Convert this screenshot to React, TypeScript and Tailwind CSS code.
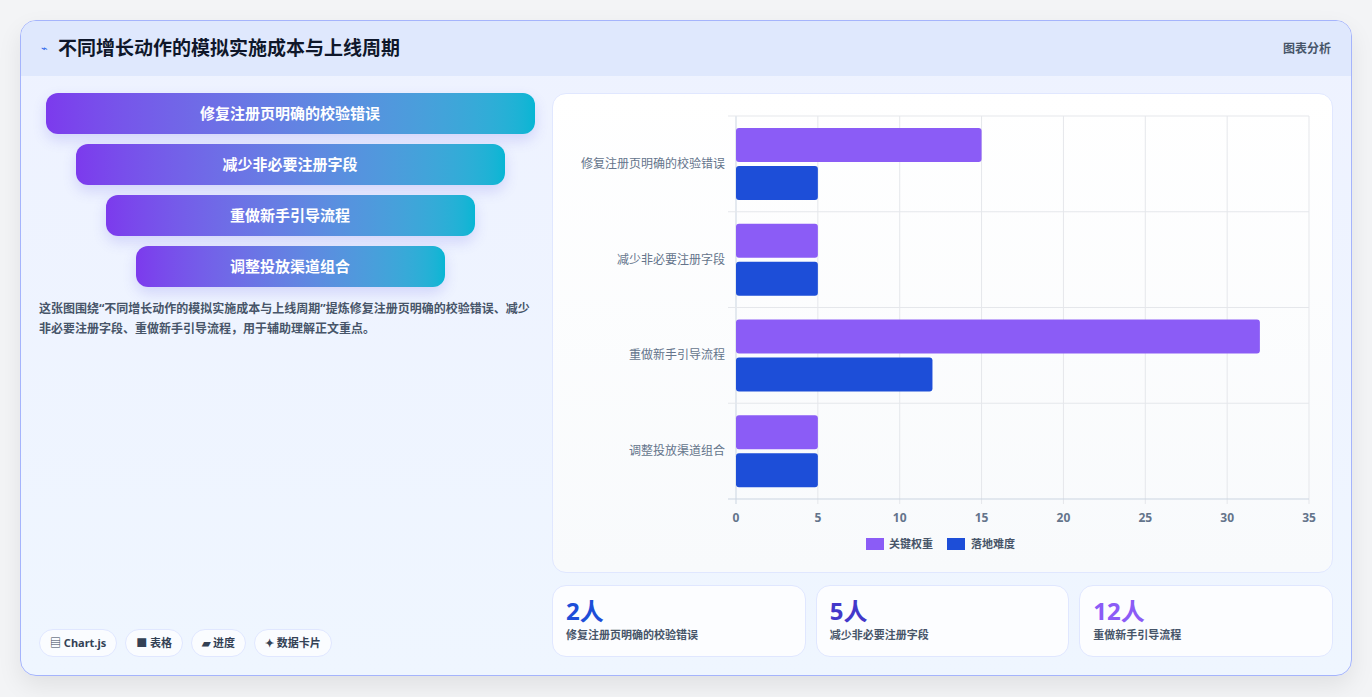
import React from "react";

const cats = ["修复注册页明确的校验错误", "减少非必要注册字段", "重做新手引导流程", "调整投放渠道组合"];
const a = [15, 5, 32, 5];
const b = [5, 5, 12, 5];

function Chart() {
  const x0 = 183, x1 = 756, y0 = 22, y1 = 405;
  const u = (x1 - x0) / 35;
  const band = (y1 - y0) / 4;
  return (
    <svg width="779" height="479" className="block">
      {[0, 5, 10, 15, 20, 25, 30, 35].map((t) => (
        <g key={t}>
          <line x1={x0 + t * u} x2={x0 + t * u} y1={y0} y2={y1 + 5} stroke={t === 0 ? "#cbd5e1" : "#e5e7eb"} />
          <text x={x0 + t * u} y={y1 + 23} textAnchor="middle" fontSize="12" fontWeight="700" fill="#64748b">{t}</text>
        </g>
      ))}
      {[0, 1, 2, 3, 4].map((i) => (
        <line key={i} x1={x0 - 8} x2={x1} y1={y0 + i * band} y2={y0 + i * band} stroke={i === 4 ? "#cbd5e1" : "#e5e7eb"} />
      ))}
      {cats.map((c, i) => {
        const top = y0 + i * band;
        return (
          <g key={c}>
            <text x={x0 - 11} y={top + band / 2 + 4} textAnchor="end" fontSize="12" fill="#64748b">{c}</text>
            <rect x={x0} y={top + 12} width={a[i] * u} height={34} rx="3" fill="#8b5cf6" />
            <rect x={x0} y={top + 50} width={b[i] * u} height={34} rx="3" fill="#1d4ed8" />
          </g>
        );
      })}
      <rect x="313" y="444" width="18" height="12" fill="#8b5cf6" />
      <text x="336" y="454" fontSize="11" fontWeight="700" fill="#475569">关键权重</text>
      <rect x="394" y="444" width="18" height="12" fill="#1d4ed8" />
      <text x="418" y="454" fontSize="11" fontWeight="700" fill="#475569">落地难度</text>
    </svg>
  );
}

export default function App() {
  const funnel = [
    ["修复注册页明确的校验错误", "w-[489px]"],
    ["减少非必要注册字段", "w-[429px]"],
    ["重做新手引导流程", "w-[369px]"],
    ["调整投放渠道组合", "w-[309px]"],
  ];
  const stats = [
    ["2人", "修复注册页明确的校验错误", "text-[#1d4ed8]"],
    ["5人", "减少非必要注册字段", "text-[#4338ca]"],
    ["12人", "重做新手引导流程", "text-[#8b5cf6]"],
  ];
  return (
    <div className="w-[1372px] h-[697px] bg-[#f3f4f6] pt-[20px] pl-[20px]" style={{ fontFamily: '"Noto Sans", "Noto Sans CJK SC", sans-serif' }}>
      <div className="w-[1332px] h-[656px] rounded-[16px] border border-[#a5b4fc] bg-gradient-to-b from-[#eef2ff] to-[#eff6ff] shadow-[0_10px_25px_rgba(0,0,0,0.08)] overflow-hidden flex flex-col">
        <div className="h-[55px] shrink-0 bg-[#dfe8fd] flex items-center justify-between px-[20px]">
          <div className="flex items-center gap-[10px]">
            <span className="text-[#2563eb] text-[11px]">⌁</span>
            <span className="text-[19px] font-bold text-[#0f172a]">不同增长动作的模拟实施成本与上线周期</span>
          </div>
          <span className="text-[12px] font-bold text-[#475569]">图表分析</span>
        </div>
        <div className="flex-1 flex gap-[17px] pl-[18px] pr-[18px] pt-[17px] pb-[18px]">
          <div className="w-[497px] flex flex-col">
            <div className="flex flex-col items-center gap-[10px] pl-[6px] pr-[0px]">
              {funnel.map(([t, w]) => (
                <div key={t} className={`${w} h-[41px] rounded-[12px] bg-gradient-to-r from-[#7c3aed] to-[#06b6d4] flex items-center justify-center text-white font-bold text-[15px] shadow-[0_6px_14px_rgba(79,70,229,0.18)]`}>{t}</div>
              ))}
            </div>
            <p className="mt-[12px] text-[12px] leading-[20px] font-bold text-[#475569]">这张图围绕“不同增长动作的模拟实施成本与上线周期”提炼修复注册页明确的校验错误、减少非必要注册字段、重做新手引导流程，用于辅助理解正文重点。</p>
            <div className="mt-auto flex gap-[8px]">
              {["▤ Chart.js", "■ 表格", "▰ 进度", "✦ 数据卡片"].map((c) => (
                <span key={c} className="h-[28px] px-[10px] rounded-full bg-white/70 border border-[#e0e7ff] flex items-center text-[11px] font-bold text-[#334155]">{c}</span>
              ))}
            </div>
          </div>
          <div className="flex-1 flex flex-col gap-[12px]">
            <div className="h-[480px] rounded-[14px] border border-[#e0e7ff] bg-gradient-to-b from-white to-[#f8fafc]">
              <Chart />
            </div>
            <div className="flex gap-[10px] flex-1">
              {stats.map(([n, l, c]) => (
                <div key={l} className="flex-1 rounded-[14px] border border-[#e0e7ff] bg-white/80 px-[13px] pt-[10px]">
                  <div className={`text-[24px] font-bold leading-[30px] ${c}`}>{n}</div>
                  <div className="text-[11px] font-bold text-[#475569] mt-[1px]">{l}</div>
                </div>
              ))}
            </div>
          </div>
        </div>
      </div>
    </div>
  );
}
